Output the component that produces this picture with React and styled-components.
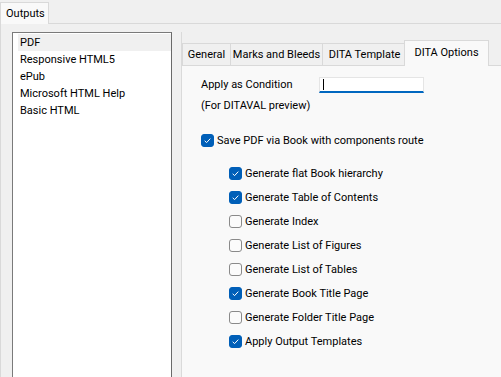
import React from "react";
import styled, { createGlobalStyle, css } from "styled-components";

const Global = createGlobalStyle`
  html, body { margin: 0; padding: 0; }
  body { font-family: Roboto, "Liberation Sans", Arial, sans-serif; font-size: 11px; color: #000; background: #f0f0f0; }
  * { box-sizing: border-box; }
`;

const Window = styled.div`
  width: 501px;
  height: 377px;
  overflow: hidden;
  background: #f0f0f0;
  display: flex;
  flex-direction: column;
`;

const OuterTabStrip = styled.div`
  height: 23px;
  display: flex;
  align-items: flex-end;
  flex-shrink: 0;
`;

const OuterTab = styled.div`
  height: 22px;
  width: 49px;
  padding-left: 5px;
  display: flex;
  align-items: center;
  white-space: nowrap;
  background: #f9f9f9;
  border: 1px solid #d9d9d9;
  border-bottom: none;
  margin-bottom: -1px;
  position: relative;
  z-index: 1;
`;

const OuterPage = styled.div`
  flex: 1;
  display: flex;
  gap: 9px;
  padding: 8px 0 0 11px;
  border-top: 1px solid #d9d9d9;
  border-left: 1px solid #d9d9d9;
  min-height: 0;
`;

const ListBox = styled.div`
  width: 160px;
  flex-shrink: 0;
  background: #fff;
  border: 1px solid #7a7a7a;
  border-right-color: #6a6a6a;
  border-bottom: none;
  padding: 1px 0 0 5px;
`;

const ListItem = styled.div`
  height: 17px;
  line-height: 17px;
  padding-left: 2px;
  white-space: nowrap;
  background: ${(p) => (p.$selected ? "#f0f0f0" : "transparent")};
`;

const RightPane = styled.div`
  flex: 1;
  display: flex;
  flex-direction: column;
  border-left: 1px solid #dadada;
  padding-top: 8px;
  min-width: 0;
`;

const TabRow = styled.div`
  display: flex;
  align-items: flex-end;
  height: 25px;
  flex-shrink: 0;
`;

const Tab = styled.div`
  flex-shrink: 0;
  width: ${(p) => p.$w}px;
  height: 22px;
  display: flex;
  align-items: center;
  justify-content: center;
  white-space: nowrap;
  border: 1px solid #d9d9d9;
  border-bottom: none;
  margin-left: -1px;
  background: #f0f0f0;
  position: relative;
  &:first-child { margin-left: 0; }
  ${(p) =>
    p.$active &&
    css`
      margin-left: -3px;
      margin-bottom: -1px;
      height: 26px;
      z-index: 1;
      padding-bottom: 3px;
      background: #f9f9f9;
    `}
`;

const Panel = styled.div`
  flex: 1;
  background: #f9f9f9;
  border-top: 1px solid #d9d9d9;
  padding: 10px 0 0 19px;
`;

const FieldRow = styled.div`
  display: flex;
  align-items: center;
  height: 17px;
`;

const FieldLabel = styled.div`
  width: 118px;
`;

const TextInput = styled.div`
  width: 105px;
  height: 16px;
  background: #fff;
  border: 1px solid #e5e5e5;
  border-bottom: 2px solid #0067c0;
  position: relative;
  &::before {
    content: "";
    position: absolute;
    left: 3px;
    top: 1px;
    width: 1px;
    height: 11px;
    background: #000;
  }
`;

const Note = styled.div`
  margin-top: 4px;
  height: 17px;
  line-height: 17px;
`;

const CheckList = styled.div`
  display: flex;
  flex-direction: column;
  gap: ${(p) => p.$gap || 0}px;
  margin-top: ${(p) => p.$top || 0}px;
  padding-left: ${(p) => p.$indent || 0}px;
`;

const CheckRow = styled.label`
  display: flex;
  align-items: center;
  gap: 3px;
  height: 18px;
  white-space: nowrap;
`;

const Box = styled.span`
  width: 13px;
  height: 13px;
  border-radius: 3px;
  display: inline-flex;
  align-items: center;
  justify-content: center;
  flex-shrink: 0;
  ${(p) =>
    p.$checked
      ? css`
          background: #005fb8;
          border: 1px solid #005fb8;
        `
      : css`
          background: #fbfbfb;
          border: 1px solid #8a8a8a;
        `}
`;

function Check({ checked, children }) {
  return (
    <CheckRow>
      <Box $checked={checked}>
        {checked && (
          <svg width="9" height="9" viewBox="0 0 9 9">
            <path d="M1.7 4.8 L3.6 6.6 L7.3 2.6" fill="none" stroke="#fff" strokeWidth="1" />
          </svg>
        )}
      </Box>
      <span>{children}</span>
    </CheckRow>
  );
}

const outputs = ["PDF", "Responsive HTML5", "ePub", "Microsoft HTML Help", "Basic HTML"];
const tabs = [
  ["General", 49],
  ["Marks and Bleeds", 93],
  ["DITA Template", 85],
  ["DITA Options", 85],
];
const subs = [
  ["Generate flat Book hierarchy", true],
  ["Generate Table of Contents", true],
  ["Generate Index", false],
  ["Generate List of Figures", false],
  ["Generate List of Tables", false],
  ["Generate Book Title Page", true],
  ["Generate Folder Title Page", false],
  ["Apply Output Templates", true],
];

export default function App() {
  return (
    <Window>
      <Global />
      <OuterTabStrip>
        <OuterTab>Outputs</OuterTab>
      </OuterTabStrip>
      <OuterPage>
        <ListBox>
          {outputs.map((o, i) => (
            <ListItem key={o} $selected={i === 0}>{o}</ListItem>
          ))}
        </ListBox>
        <RightPane>
          <TabRow>
            {tabs.map(([t, w], i) => (
              <Tab key={t} $w={w} $active={i === 3}>{t}</Tab>
            ))}
          </TabRow>
          <Panel>
            <FieldRow>
              <FieldLabel>Apply as Condition</FieldLabel>
              <TextInput />
            </FieldRow>
            <Note>(For DITAVAL preview)</Note>
            <CheckList $top={17}>
              <Check checked>Save PDF via Book with components route</Check>
            </CheckList>
            <CheckList $top={15} $indent={28} $gap={6}>
              {subs.map(([t, c]) => (
                <Check key={t} checked={c}>{t}</Check>
              ))}
            </CheckList>
          </Panel>
        </RightPane>
      </OuterPage>
    </Window>
  );
}
